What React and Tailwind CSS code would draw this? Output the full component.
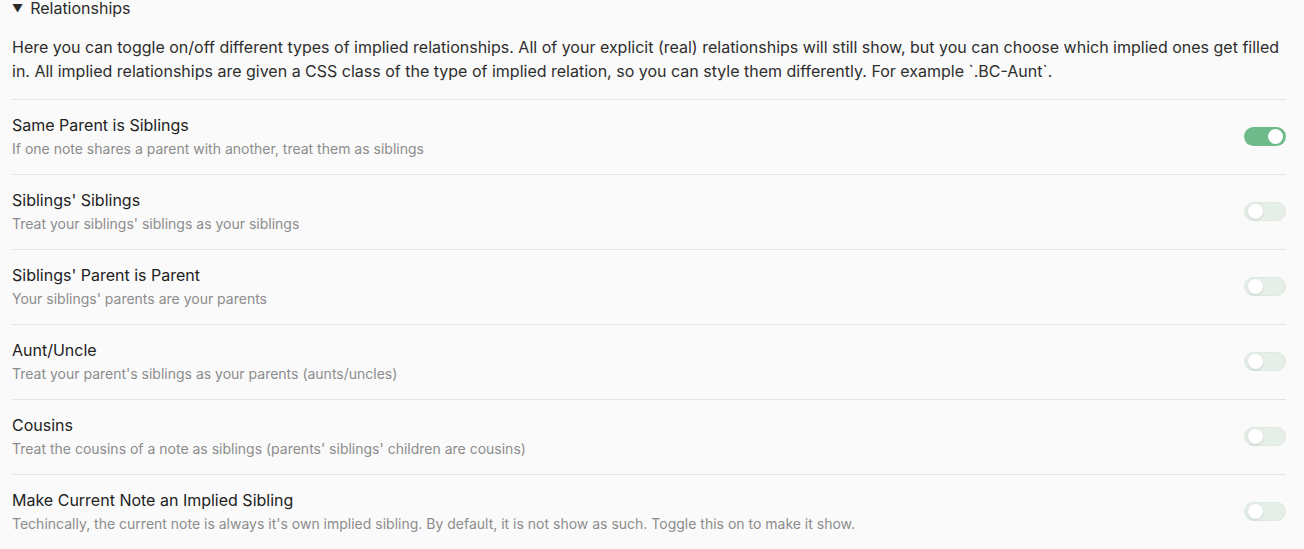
import React, { useState } from "react";

const settings = [
  {
    name: "Same Parent is Siblings",
    desc: "If one note shares a parent with another, treat them as siblings",
    on: true,
  },
  {
    name: "Siblings' Siblings",
    desc: "Treat your siblings' siblings as your siblings",
    on: false,
  },
  {
    name: "Siblings' Parent is Parent",
    desc: "Your siblings' parents are your parents",
    on: false,
  },
  {
    name: "Aunt/Uncle",
    desc: "Treat your parent's siblings as your parents (aunts/uncles)",
    on: false,
  },
  {
    name: "Cousins",
    desc: "Treat the cousins of a note as siblings (parents' siblings' children are cousins)",
    on: false,
  },
  {
    name: "Make Current Note an Implied Sibling",
    desc: "Techincally, the current note is always it's own implied sibling. By default, it is not show as such. Toggle this on to make it show.",
    on: false,
  },
];

function Toggle({ on, onClick }) {
  return (
    <button
      onClick={onClick}
      className={
        on
          ? "relative w-[42px] h-[19px] rounded-full bg-[#6fba8b] shrink-0"
          : "relative w-[42px] h-[19px] rounded-full bg-[#e6efe7] border border-[#dde8de] shrink-0"
      }
    >
      <span
        className={
          on
            ? "absolute top-[2px] right-[3px] w-[15px] h-[15px] rounded-full bg-white"
            : "absolute top-[1px] left-[3px] w-[15px] h-[15px] rounded-full bg-white shadow-sm"
        }
      />
    </button>
  );
}

export default function App() {
  const [values, setValues] = useState(settings.map((s) => s.on));

  const flip = (i) => {
    setValues((v) => v.map((x, j) => (j === i ? !x : x)));
  };

  return (
    <div
      className="min-h-screen bg-[#fafafa] pl-3 pr-[18px] text-[#222222]"
      style={{ fontFamily: "Inter, 'Noto Sans', sans-serif" }}
    >
      <div className="flex items-center gap-[7px] text-[16px] leading-[16px] text-[#2b2b2b]">
        <span className="text-[11px]">▼</span>
        <span>Relationships</span>
      </div>

      <p className="mt-[19px] mb-4 text-[16px] leading-6 text-[#2e2e2e]">
        Here you can toggle on/off different types of implied relationships. All of your explicit (real) relationships will still show, but you can choose which implied ones get filled in. All implied relationships are given a CSS class of the type of implied relation, so you can style them differently. For example `.BC-Aunt`.
      </p>

      {settings.map((s, i) => (
        <div
          key={s.name}
          className="flex items-center justify-between border-t border-[#e3e3e3] pt-[13px] pb-[15px]"
        >
          <div>
            <div className="text-[16px] leading-6 text-[#222222]">{s.name}</div>
            <div className="mt-[2px] text-[14px] leading-5 text-[#8c8c8c]">{s.desc}</div>
          </div>
          <Toggle on={values[i]} onClick={() => flip(i)} />
        </div>
      ))}
    </div>
  );
}
